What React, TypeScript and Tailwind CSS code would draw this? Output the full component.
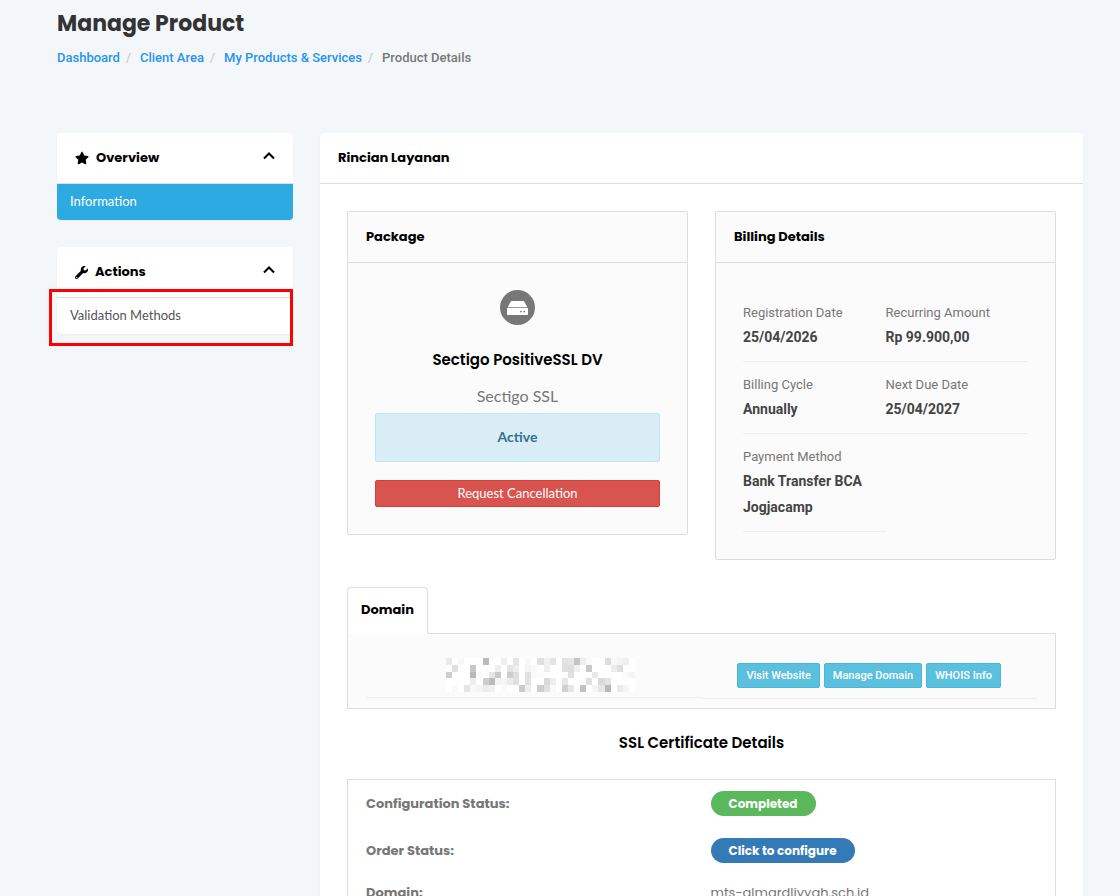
import React from 'react';
import { ChevronUp } from 'lucide-react';
import { FaStar, FaWrench } from 'react-icons/fa';

interface BillingItem {
  label: string;
  value: string;
}

const breadcrumbs = ['Dashboard', 'Client Area', 'My Products & Services'];

const billingItems: BillingItem[] = [
  { label: 'Registration Date', value: '25/04/2026' },
  { label: 'Recurring Amount', value: 'Rp 99.900,00' },
  { label: 'Billing Cycle', value: 'Annually' },
  { label: 'Next Due Date', value: '25/04/2027' },
  { label: 'Payment Method', value: 'Bank Transfer BCA Jogjacamp' },
];

const domainActions = ['Visit Website', 'Manage Domain', 'WHOIS Info'];

// [column, grey level] for every row of the censored domain name
const mosaic: [number, number][][] = [
  [[0, 235], [2, 248], [6, 187], [9, 240], [11, 229], [13, 248], [15, 224], [16, 240], [17, 229], [19, 226], [20, 230], [21, 196], [22, 238], [23, 250], [26, 221], [27, 248], [28, 244], [29, 238]],
  [[1, 224], [4, 198], [8, 238], [10, 228], [11, 238], [13, 244], [14, 250], [16, 238], [19, 224], [20, 221], [21, 240], [23, 200], [27, 236], [28, 222]],
  [[0, 206], [4, 184], [5, 250], [7, 230], [8, 200], [10, 205], [11, 221], [13, 224], [14, 250], [15, 252], [20, 226], [24, 232], [29, 250], [30, 244]],
  [[4, 238], [6, 206], [7, 187], [8, 244], [9, 245], [10, 236], [11, 224], [13, 226], [16, 218], [17, 238], [19, 230], [23, 224], [25, 218], [26, 228]],
  [[1, 249], [3, 230], [4, 249], [5, 244], [6, 236], [7, 240], [9, 250], [12, 204], [13, 238], [15, 206], [16, 224], [17, 249], [19, 208], [20, 230], [22, 194], [24, 244], [25, 230], [26, 184], [28, 234], [29, 245]],
];

const Mosaic: React.FC = () => (
  <svg width="189" height="34" viewBox="0 0 31 5" preserveAspectRatio="none" shapeRendering="crispEdges">
    <rect width="31" height="5" fill="#fff" />
    {mosaic.map((row, y) =>
      row.map(([x, grey]) => (
        <rect key={`${x}-${y}`} x={x} y={y} width="1" height="1" fill={`rgb(${grey},${grey},${grey})`} />
      ))
    )}
  </svg>
);

const DriveIcon: React.FC = () => (
  <svg width="35" height="35" viewBox="0 0 35 35">
    <circle cx="17.5" cy="17.5" r="17.5" fill="#777" />
    <path d="M12 11h11c.7 0 1.200.3 1.500.9l2.800 5.400H7.700l2.800-5.400c.3-.6.800-.9 1.500-.9z" fill="#fff" />
    <path d="M7 18h21v6.200c0 .5-.3.800-.8.800H7.800c-.5 0-.8-.3-.8-.8z" fill="#fff" />
    <circle cx="20.800" cy="21.600" r="0.900" fill="#777" />
    <circle cx="24.200" cy="21.600" r="0.900" fill="#777" />
  </svg>
);

const SideHeader: React.FC<{ icon: React.ReactNode; title: string }> = ({ icon, title }) => (
  <button
    type="button"
    className="flex h-[50px] w-full items-center gap-[7px] px-[18px] font-[Poppins,Inter,sans-serif] text-[13px] font-bold text-black"
  >
    {icon}
    <span>{title}</span>
    <ChevronUp className="-mt-1 -mr-1 ml-auto size-5" strokeWidth={2.5} strokeLinecap="butt" strokeLinejoin="miter" />
  </button>
);

const Panel: React.FC<{ title: string; children: React.ReactNode }> = ({ title, children }) => (
  <section className="rounded-xs border border-[#ddd] bg-[#fbfbfb]">
    <h3 className="border-b border-[#ddd] px-[18px] py-[15px] font-[Poppins,Inter,sans-serif] text-[13px] leading-5 font-bold text-black">
      {title}
    </h3>
    <div className="p-[27px]">{children}</div>
  </section>
);

const App: React.FC = () => {
  return (
    <div className="h-screen overflow-hidden bg-[#f3f7fa] pr-[37px] pl-[57px] font-[Roboto,sans-serif] text-[#777]">
      <header className="pt-2">
        <h1 className="font-[Poppins,Inter,sans-serif] text-[22px] leading-8 font-bold text-[#333]">Manage Product</h1>
        <nav className="mt-2 flex text-[13px] leading-5 font-medium">
          {breadcrumbs.map((item) => (
            <React.Fragment key={item}>
              <a href="#" className="text-[#2793f2]">{item}</a>
              <span className="mr-[9px] ml-[6px] text-[#ccc]">/</span>
            </React.Fragment>
          ))}
          <span>Product Details</span>
        </nav>
      </header>

      <div className="mt-[65px] flex items-start gap-[27px]">
        {/* Sidebar */}
        <aside className="w-[236px] shrink-0 font-[Lato,sans-serif] text-[13px]">
          <div className="overflow-hidden rounded bg-white shadow-xs">
            <SideHeader icon={<FaStar className="size-[14px]" />} title="Overview" />
            <a href="#" className="block border-t border-[#ddd] bg-[#2daae1] px-[13px] pt-[7px] pb-[9px] leading-5 text-white">
              Information
            </a>
          </div>

          <div className="relative mt-[27px] rounded bg-white shadow-xs">
            <SideHeader icon={<FaWrench className="size-[13px]" />} title="Actions" />
            <a href="#" className="block border-t border-[#ddd] px-[13px] pt-[7px] pb-[9px] leading-5 text-[#555]">
              Validation Methods
            </a>
            <div className="pointer-events-none absolute top-[42px] right-0 -bottom-3 -left-2 border-3 border-[#f00]" />
          </div>
        </aside>

        {/* Service details */}
        <main className="min-w-0 flex-1 rounded bg-white shadow-xs">
          <h2 className="border-b border-[#ddd] px-[18px] py-[15px] font-[Poppins,Inter,sans-serif] text-[13px] leading-5 font-bold text-black">
            Rincian Layanan
          </h2>

          <div className="p-[27px]">
            <div className="grid grid-cols-2 items-start gap-[27px]">
              <Panel title="Package">
                <div className="flex flex-col items-center font-[Lato,sans-serif]">
                  <DriveIcon />
                  <h4 className="mt-6 font-[Poppins,Inter,sans-serif] text-[15px] leading-[22px] font-semibold text-black">
                    Sectigo PositiveSSL DV
                  </h4>
                  <p className="mt-[13px] text-[16px] leading-6">Sectigo SSL</p>
                  <div className="mt-[5px] w-full rounded-xs border border-[#bce8f1] bg-[#d9edf7] pt-3 pb-[14px] text-center text-[14px] leading-[21px] font-bold text-[#31708f]">
                    Active
                  </div>
                  <button
                    type="button"
                    className="mt-[18px] w-full rounded-xs border border-[#d43f3a] bg-[#d9534f] py-[3px] text-[13px] leading-[19px] text-white"
                  >
                    Request Cancellation
                  </button>
                </div>
              </Panel>

              <Panel title="Billing Details">
                <dl className="grid grid-cols-2">
                  {billingItems.map((item) => (
                    <div key={item.label} className="border-b border-[#eee] py-[11px]">
                      <dt className="text-[13px] leading-[23px]">{item.label}</dt>
                      <dd className="text-[14px] leading-[26px] font-bold text-[#444]">{item.value}</dd>
                    </div>
                  ))}
                </dl>
              </Panel>
            </div>

            {/* Domain tab */}
            <div className="mt-[27px]">
              <button
                type="button"
                className="relative -mb-px block rounded-t border border-b-0 border-[#ddd] bg-white px-[13px] pt-3 pb-[14px] font-[Poppins,Inter,sans-serif] text-[13px] leading-5 font-bold text-black"
              >
                Domain
              </button>
              <div className="grid grid-cols-2 border border-[#ddd] bg-[#fbfbfb] px-[18px] pb-[9px]">
                <div className="flex h-16 items-end justify-center border-b border-[#eee] pb-[5px] pl-[14px]">
                  <Mosaic />
                </div>
                <div className="flex h-[65px] items-end justify-center gap-1 border-b border-[#eee] pb-[10px]">
                  {domainActions.map((action) => (
                    <button
                      key={action}
                      type="button"
                      className="rounded-xs border border-[#46b8da] bg-[#5bc0de] px-2 py-[3px] text-[11px] leading-[17px] font-medium whitespace-nowrap text-white"
                    >
                      {action}
                    </button>
                  ))}
                </div>
              </div>
            </div>

            {/* SSL certificate */}
            <h3 className="mt-[22px] text-center font-[Poppins,Inter,sans-serif] text-[15px] leading-6 font-semibold text-black">
              SSL Certificate Details
            </h3>
            <div className="mt-6 border border-[#ddd] px-[18px] font-[Poppins,Inter,sans-serif] text-[13px]">
              <table className="w-full text-left">
                <tbody>
                  <tr className="h-[47px]">
                    <th className="w-1/2 font-bold">Configuration Status:</th>
                    <td className="w-1/2 pl-[9px]">
                      <span className="inline-block rounded-full bg-[#5cb85c] px-[18px] text-[12px] leading-[25px] font-bold text-white">
                        Completed
                      </span>
                    </td>
                  </tr>
                  <tr className="h-[47px]">
                    <th className="font-bold">Order Status:</th>
                    <td className="pl-[9px]">
                      <a href="#" className="inline-block rounded-full bg-[#337ab7] px-[18px] text-[12px] leading-[25px] font-bold text-white">
                        Click to configure
                      </a>
                    </td>
                  </tr>
                  <tr className="h-[37px]">
                    <th className="font-bold">Domain:</th>
                    <td className="pl-[9px]">mts-almardliyyah.sch.id</td>
                  </tr>
                </tbody>
              </table>
            </div>
          </div>
        </main>
      </div>
    </div>
  );
};

export default App;
